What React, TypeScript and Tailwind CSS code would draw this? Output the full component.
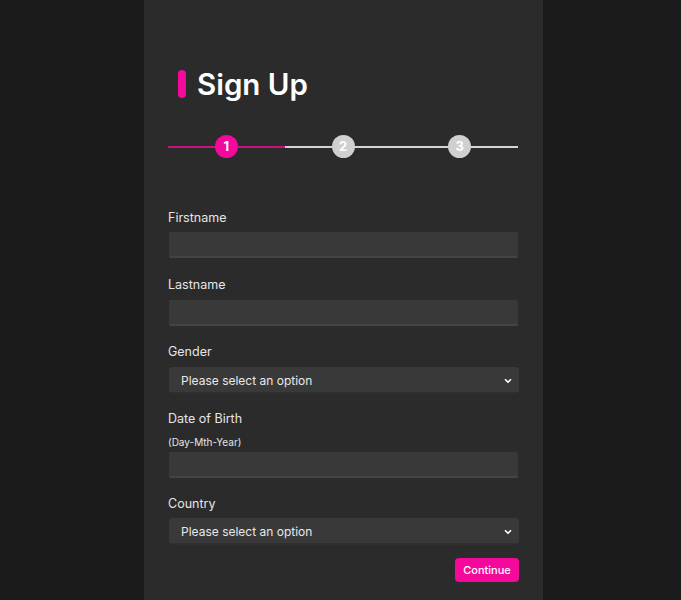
import { ChevronDown } from 'lucide-react';

const font = { fontFamily: 'Inter, "Noto Sans", sans-serif' };

function Label({ children, className = '' }: { children: React.ReactNode; className?: string }) {
  return <label className={`block text-[12.5px] leading-[18px] text-[#e6e6e6] ${className}`}>{children}</label>;
}

function TextInput({ className = '' }: { className?: string }) {
  return (
    <input
      type="text"
      className={`block h-[26px] w-[349px] ml-px rounded-[2px] border-b-2 border-[#444] bg-[#393939] px-3 text-[12px] text-white outline-none ${className}`}
    />
  );
}

function Select({ className = '' }: { className?: string }) {
  return (
    <div className={`relative ml-px w-[350px] ${className}`}>
      <select className="block h-[27px] w-full appearance-none rounded-[3px] border-b-2 border-[#2f2f2f] bg-[#393939] pl-3 pt-[2px] text-[12px] text-[#e8e8e8] outline-none">
        <option>Please select an option</option>
      </select>
      <ChevronDown className="pointer-events-none absolute right-[6px] top-[9px] h-[10px] w-[10px] text-white" strokeWidth={4} />
    </div>
  );
}

function Stepper() {
  const steps = [1, 2, 3];
  return (
    <div className="mt-[31px] flex h-[23px] w-[350px]">
      {steps.map((n) => (
        <div key={n} className="relative flex flex-1 items-center justify-center">
          <div className={`absolute left-0 right-0 top-[11px] h-[2px] ${n === 1 ? 'bg-[#c8127f]' : 'bg-[#d4d4d4]'}`} />
          <div
            className={`relative flex h-[23px] w-[23px] items-center justify-center rounded-full text-[13px] font-bold leading-none text-white ${
              n === 1 ? 'bg-[#f5089c]' : 'bg-[#d0d0d0]'
            }`}
          >
            {n}
          </div>
        </div>
      ))}
    </div>
  );
}

export default function App() {
  return (
    <div className="min-h-[600px] bg-[#1b1b1b]" style={font}>
      <div className="ml-[144px] min-h-[600px] w-[399px] bg-[#2b2b2b] px-6 pt-16">
        <div className="flex h-10 items-center">
          <div className="ml-[10px] h-[28px] w-[8px] rounded-sm bg-[#f5089c]" />
          <h1 className="ml-[11px] text-[29.5px] font-semibold leading-10 text-white">Sign Up</h1>
        </div>

        <Stepper />

        <form className="flex flex-col">
          <Label className="mt-[51px]">Firstname</Label>
          <TextInput className="mt-[5px]" />

          <Label className="mt-[18px]">Lastname</Label>
          <TextInput className="mt-[6px]" />

          <Label className="mt-[17px]">Gender</Label>
          <Select className="mt-[6px]" />

          <Label className="mt-[16px]">Date of Birth</Label>
          <span className="mt-[7px] block text-[10px] leading-[14px] text-[#e6e6e6]">(Day-Mth-Year)</span>
          <TextInput className="mt-[3px]" />

          <Label className="mt-[17px]">Country</Label>
          <Select className="mt-[5px]" />

          <div className="mt-[13px] flex justify-end">
            <button
              type="button"
              className="h-6 w-16 rounded-[4px] bg-[#f5089c] text-[11px] font-medium text-white"
            >
              Continue
            </button>
          </div>
        </form>
      </div>
    </div>
  );
}
